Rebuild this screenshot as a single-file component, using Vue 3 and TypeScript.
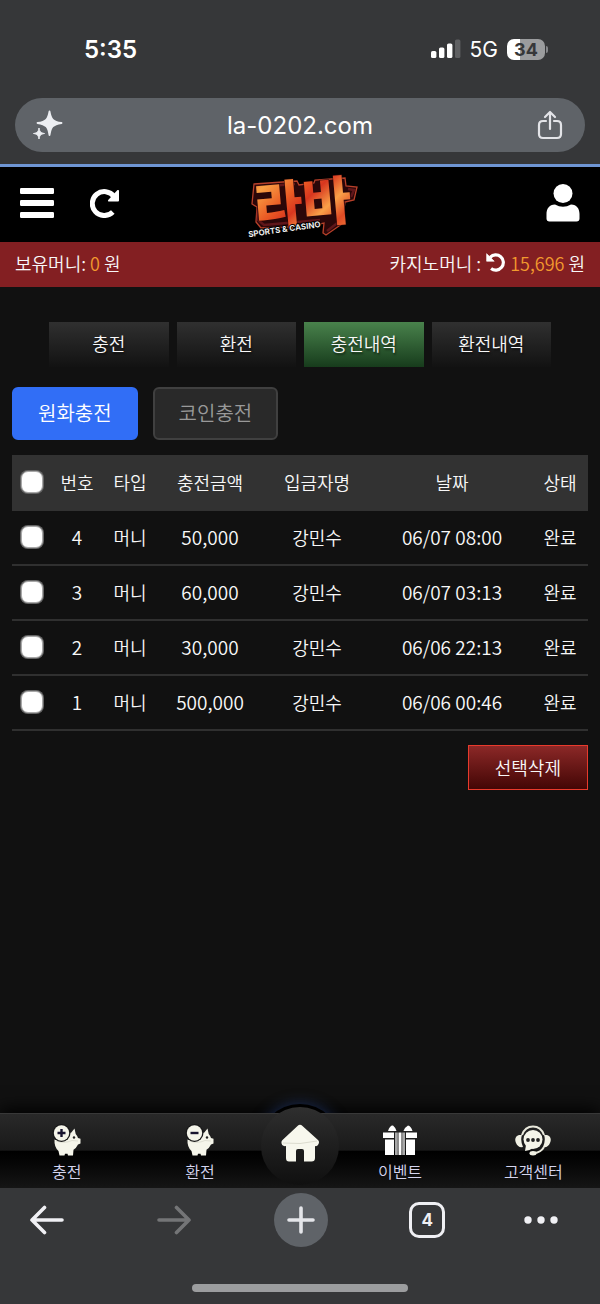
<script setup lang="ts">
import { ref, computed } from 'vue'

interface Deposit {
  no: number
  type: string
  amount: string
  name: string
  date: string
  status: string
}

const tabs = ['충전', '환전', '충전내역', '환전내역']
const activeTab = ref(2)
const methods = ['원화충전', '코인충전']
const activeMethod = ref(0)

const rows: Deposit[] = [
  { no: 4, type: '머니', amount: '50,000', name: '강민수', date: '06/07 08:00', status: '완료' },
  { no: 3, type: '머니', amount: '60,000', name: '강민수', date: '06/07 03:13', status: '완료' },
  { no: 2, type: '머니', amount: '30,000', name: '강민수', date: '06/06 22:13', status: '완료' },
  { no: 1, type: '머니', amount: '500,000', name: '강민수', date: '06/06 00:46', status: '완료' },
]

const selected = ref<number[]>([])
const allSelected = computed({
  get: () => selected.value.length === rows.length,
  set: (on: boolean) => {
    selected.value = on ? rows.map((r) => r.no) : []
  },
})
</script>

<template>
  <div class="screen">
    <div class="browser-top">
      <div class="status">
        <span class="clock">5:35</span>
        <div class="status-right">
          <svg width="30" height="20" viewBox="0 0 30 20" aria-hidden="true">
            <rect x="0" y="12" width="5.400" height="7" rx="1.600" fill="#fff" />
            <rect x="8" y="8.500" width="5.400" height="10.500" rx="1.600" fill="#fff" />
            <rect x="16" y="4.500" width="5.400" height="14.500" rx="1.600" fill="#fff" />
            <rect x="24" y="0.500" width="5.400" height="18.500" rx="1.600" fill="#5f6062" />
          </svg>
          <span class="network">5G</span>
          <span class="battery"><span class="battery-body">34</span><span class="battery-tip"></span></span>
        </div>
      </div>
      <div class="address">
        <button type="button" class="bare" aria-label="AI">
          <svg width="32" height="32" viewBox="0 0 32 32">
            <path d="M17.500 2.500C18.800 10 20.500 12.700 29.500 14C20.500 15.300 18.800 18 17.500 26C16.200 18 14.500 15.300 5.500 14C14.500 12.700 16.200 10 17.500 2.500Z" fill="#eceef2" stroke="#eceef2" stroke-width="1.800" stroke-linejoin="round" />
            <path d="M7 19C7.600 22.500 8.500 23.900 12.500 24.500C8.500 25.100 7.600 26.500 7 30C6.400 26.500 5.500 25.100 1.500 24.500C5.500 23.900 6.400 22.500 7 19Z" fill="#eceef2" stroke="#eceef2" stroke-linejoin="round" />
          </svg>
        </button>
        <span class="url">la-0202.com</span>
        <button type="button" class="bare" aria-label="공유">
          <svg width="28" height="32" viewBox="0 0 28 32" fill="none" stroke="#e3e4e8" stroke-width="2.200" stroke-linecap="round" stroke-linejoin="round">
            <path d="M10 12H7Q3 12 3 16V25Q3 29 7 29H21Q25 29 25 25V16Q25 12 21 12H18" />
            <path d="M14 20V4M9 8L14 3L19 8" />
          </svg>
        </button>
      </div>
    </div>
    <div class="progress"></div>

    <header class="site-header">
      <div class="left-tools">
        <button type="button" class="bare" aria-label="메뉴">
          <svg width="34" height="30" viewBox="0 0 34 30" fill="#fff">
            <rect y="0" width="34" height="6" rx="1.200" />
            <rect y="12" width="34" height="6" rx="1.200" />
            <rect y="24" width="34" height="6" rx="1.200" />
          </svg>
        </button>
        <button type="button" class="bare" aria-label="새로고침">
          <svg width="30" height="30" viewBox="0 0 30 30">
            <path d="M22.800 24A12 12 0 1 1 24 8.500" fill="none" stroke="#fff" stroke-width="5" />
            <path d="M29 2.500V12.500Q29 13.500 28 13.500H18.500Q17.500 13 18.200 12L27.500 2.100Q28.600 1.500 29 2.500Z" fill="#fff" />
          </svg>
        </button>
      </div>
      <a href="#" class="logo" aria-label="라바 SPORTS &amp; CASINO">
        <svg width="112" height="60" viewBox="0 0 112 60">
          <defs>
            <linearGradient id="lava" x1="0" y1="0" x2="1" y2="1">
              <stop offset="0" stop-color="#ee5a22" />
              <stop offset="0.200" stop-color="#f9a044" />
              <stop offset="0.400" stop-color="#ea5a24" />
              <stop offset="0.520" stop-color="#d8361f" />
              <stop offset="0.680" stop-color="#f9a048" />
              <stop offset="0.820" stop-color="#e04a24" />
              <stop offset="1" stop-color="#f59145" />
            </linearGradient>
          </defs>
          <path d="M7 6L50 3L52 7L67 5L68 2L98 0L99 8L110 9L107 22L98 24L95 46L79 57L76 55L77 45L54 50L48 49L14 50L9 44L10 29L5 26Z" fill="#2b0709" stroke="#b8402a" stroke-width="1.300" />
          <path d="M9 9L48 6M11 30V42L17 47L73 42M97 24L93 43L80 53M101 11L107 12L104 19" fill="none" stroke="#60161a" stroke-width="2.500" />
          <g transform="rotate(-5 56 30)">
            <text class="logo-word" x="56" y="45" text-anchor="middle">라바</text>
          </g>
          <g transform="rotate(-8 38 52)">
            <text class="logo-sub" x="1" y="54">SPORTS &amp; CASINO</text>
          </g>
        </svg>
      </a>
      <button type="button" class="bare" aria-label="내 정보">
        <svg width="34" height="40" viewBox="0 0 34 40" fill="#fff">
          <circle cx="17" cy="10.500" r="9.500" />
          <path d="M9 21.500Q17 26 25 21.500C31 21.500 33.500 26 33.500 31V35.500Q33.500 38.500 30.500 38.500H3.500Q.500 38.500 .500 35.500V31C.500 26 3 21.500 9 21.500Z" />
        </svg>
      </button>
    </header>

    <div class="money">
      <span>보유머니: <b>0</b> 원</span>
      <span class="casino">카지노머니 :
        <button type="button" class="bare" aria-label="카지노머니 새로고침">
          <svg width="19" height="19" viewBox="0 0 30 30">
            <g transform="matrix(-1 0 0 1 30 0)">
              <path d="M22 24.500A12 12 0 1 1 23.500 7" fill="none" stroke="#fff" stroke-width="5" />
              <path d="M29 1V13H17Z" fill="#fff" stroke="#fff" stroke-linejoin="round" />
            </g>
          </svg>
        </button>
        <span><b>15,696</b> 원</span></span>
    </div>

    <main class="content">
      <nav class="tabs" aria-label="충전 및 환전">
        <button v-for="(tab, i) in tabs" :key="tab" type="button" class="tab" :class="{ active: i === activeTab }" @click="activeTab = i">{{ tab }}</button>
      </nav>
      <div class="methods">
        <button v-for="(m, i) in methods" :key="m" type="button" class="method" :class="{ active: i === activeMethod }" @click="activeMethod = i">{{ m }}</button>
      </div>
      <table class="history">
        <colgroup>
          <col class="c-check" /><col class="c-no" /><col class="c-type" /><col class="c-amount" /><col class="c-name" /><col class="c-date" /><col class="c-status" />
        </colgroup>
        <thead>
          <tr>
            <th><input v-model="allSelected" type="checkbox" aria-label="전체 선택" /></th>
            <th>번호</th>
            <th>타입</th>
            <th>충전금액</th>
            <th>입금자명</th>
            <th>날짜</th>
            <th>상태</th>
          </tr>
        </thead>
        <tbody>
          <tr v-for="row in rows" :key="row.no">
            <td><input v-model="selected" type="checkbox" :value="row.no" :aria-label="`${row.no}번 선택`" /></td>
            <td class="num">{{ row.no }}</td>
            <td>{{ row.type }}</td>
            <td class="num">{{ row.amount }}</td>
            <td>{{ row.name }}</td>
            <td class="num">{{ row.date }}</td>
            <td>{{ row.status }}</td>
          </tr>
        </tbody>
      </table>
      <button type="button" class="delete">선택삭제</button>
    </main>

    <nav class="site-nav" aria-label="하단 메뉴">
      <span class="glow"></span>
      <div class="site-nav-bar">
        <a v-for="kind in ['충전', '환전']" :key="kind" href="#" class="nav-item">
          <svg width="34" height="34" viewBox="0 0 34 34">
            <path d="M4.500 16.500Q14 20 19 10Q21.500 10.500 22.300 8.300L24.500 5.500L25.700 11Q27.500 13 28 15L30.500 15.800V20.500L28 21.500Q26 25.500 23.500 26.800L23 32.500H18L17.500 30.800H15L14.500 32.500H9.500L8.500 28Q4 24 4.500 16.500Z" fill="#f5f5ea" />
            <path d="M6 18Q14 21 22 17.500L28 18" fill="none" stroke="#d5d5c8" stroke-width="0.700" />
            <circle cx="24" cy="14.500" r="1.200" fill="#222" />
            <circle cx="11.500" cy="10" r="9" fill="#171718" />
            <circle cx="11.500" cy="10" r="7.700" fill="#f5f5ea" />
            <path :d="kind === '충전' ? 'M7.500 10H15.500M11.500 6V14' : 'M7.500 10H15.500'" stroke="#18142f" stroke-width="2.400" />
          </svg>
          <span>{{ kind }}</span>
        </a>
        <a href="#" class="home" aria-label="홈">
          <svg width="40" height="40" viewBox="0 0 40 40">
            <path d="M17.500 3Q20 .500 22.500 3L38 17Q40 19 38 22Q37 23.500 35 23V35Q35 38.500 31.500 38.500H24V28Q24 26 22 26H18Q16 26 16 28V38.500H9Q6 38.500 6 35V23Q3.500 23.500 2.200 22Q.500 19 2.500 17Z" fill="#f7f7ed" />
            <path d="M3 20Q20 22 37 18" fill="none" stroke="#dcdccf" />
          </svg>
        </a>
        <a href="#" class="nav-item">
          <svg width="34" height="34" viewBox="0 0 34 34">
            <g fill="#fff">
              <path d="M5 8Q7 2 10 2.500Q12.500 4.500 13.500 8ZM20.500 8Q21.500 4.500 25 2.500Q28 3 29.500 8Z" />
              <path d="M0 9.500H11V15H0ZM23 9.500H34V15H23ZM2 16.500H11V32H2ZM23 16.500H32V32H23ZM15.500 9.500H18.500V32H15.500Z" />
            </g>
            <path d="M12 9.500H14.800V32H12ZM19.200 9.500H22V32H19.200Z" fill="#a8a8a8" />
          </svg>
          <span>이벤트</span>
        </a>
        <a href="#" class="nav-item">
          <svg width="38" height="34" viewBox="0 0 38 34">
            <path d="M8 12Q11 3.500 19 3.500Q27 3.500 30 12" fill="none" stroke="#e9e9dc" stroke-width="2" />
            <path d="M8 12Q6 17 9 24Q4 25 2 20Q-.500 14 5 12ZM30 12Q32 17 29 24Q34 25 36 20Q38.500 14 33 12Z" fill="#f0f0e4" />
            <path d="M30 24Q27 29.500 20 30" fill="none" stroke="#e9e9dc" stroke-width="2" />
            <ellipse cx="19" cy="30.200" rx="3.500" ry="2.200" fill="#f0f0e4" />
            <circle cx="19" cy="16.500" r="9.500" fill="#f5f5ea" />
            <path d="M12 22L11 28Q15 28 19 25Z" fill="#f5f5ea" />
            <circle cx="14" cy="17" r="1.900" fill="#222" /><circle cx="19" cy="17" r="1.900" fill="#222" /><circle cx="24" cy="17" r="1.900" fill="#222" />
          </svg>
          <span>고객센터</span>
        </a>
      </div>
    </nav>

    <footer class="browser-bottom">
      <div class="toolbar">
        <button type="button" class="bare" aria-label="뒤로">
          <svg width="36" height="30" viewBox="0 0 36 30" fill="none" stroke="#f0f0f4" stroke-width="3.600" stroke-linecap="round" stroke-linejoin="round"><path d="M33 15H3M15.500 2.500L3 15L15.500 27.500" /></svg>
        </button>
        <button type="button" class="bare" aria-label="앞으로" disabled>
          <svg width="36" height="30" viewBox="0 0 36 30" fill="none" stroke="#747577" stroke-width="3.600" stroke-linecap="round" stroke-linejoin="round"><path d="M3 15H33M20.500 2.500L33 15L20.500 27.500" /></svg>
        </button>
        <button type="button" class="bare new-tab" aria-label="새 탭">
          <svg width="28" height="28" viewBox="0 0 28 28" fill="none" stroke="#e4e5e9" stroke-width="3.600" stroke-linecap="round"><path d="M2 14H26M14 2V26" /></svg>
        </button>
        <button type="button" class="bare" aria-label="탭 목록"><span class="tab-count">4</span></button>
        <button type="button" class="bare" aria-label="더보기">
          <svg width="34" height="8" viewBox="0 0 34 8" fill="#f0f0f4"><circle cx="4" cy="4" r="3.700" /><circle cx="17" cy="4" r="3.700" /><circle cx="30" cy="4" r="3.700" /></svg>
        </button>
      </div>
      <div class="home-indicator"></div>
    </footer>
  </div>
</template>

<style>
body {
  background: #111;
}
</style>

<style scoped>
.screen {
  display: flex;
  flex-direction: column;
  min-height: 100vh;
  background: #111;
  color: #f8f8f8;
  font-family: "Noto Sans CJK KR", sans-serif;
  font-weight: 350;
  font-size: 18px;
}
.screen *,
.screen *::before {
  box-sizing: border-box;
}
button {
  font: inherit;
  color: inherit;
  cursor: pointer;
}
svg {
  display: block;
}
.bare {
  display: flex;
  align-items: center;
  justify-content: center;
  padding: 0;
  border: 0;
  background: none;
}
a {
  color: inherit;
  text-decoration: none;
}

.browser-top {
  padding: 0 15px 12px;
  background: #363739;
  color: #fff;
  font-family: Inter, sans-serif;
}
.status {
  display: flex;
  align-items: center;
  justify-content: space-between;
  height: 98px;
  padding: 0 37px 0 69px;
}
.clock {
  font-size: 24px;
  font-weight: 600;
}
.status-right {
  display: flex;
  align-items: center;
  gap: 9px;
}
.network {
  font-size: 21px;
  font-weight: 400;
}
.battery {
  display: flex;
  align-items: center;
  gap: 1px;
}
.battery-body {
  width: 38px;
  height: 21px;
  border-radius: 7px;
  background: linear-gradient(90deg, #fff 34%, #9b9c9e 34%);
  color: #363739;
  font-size: 18px;
  font-weight: 700;
  line-height: 21px;
  text-align: center;
}
.battery-tip {
  width: 2px;
  height: 7px;
  border-radius: 0 2px 2px 0;
  background: #85868a;
}
.address {
  display: flex;
  align-items: center;
  justify-content: space-between;
  height: 54px;
  padding: 0 21px 0 17px;
  border-radius: 27px;
  background: #5f6368;
}
.url {
  font-size: 24px;
  font-weight: 400;
}
.progress {
  height: 3px;
  background: #6f95d3;
}

.site-header {
  display: flex;
  align-items: center;
  justify-content: space-between;
  height: 75px;
  padding: 0 20px 4px;
  background: #000;
  position: relative;
}
.left-tools {
  display: flex;
  align-items: center;
  gap: 36px;
}
.logo {
  position: absolute;
  left: 50%;
  top: 11px;
  margin-left: -53px;
}
.logo svg {
  overflow: visible;
}
.logo-word {
  font-size: 53px;
  font-weight: 900;
  fill: url(#lava);
  stroke: #2b0709;
  stroke-width: 1px;
  paint-order: stroke;
}
.logo-sub {
  font-family: Inter, sans-serif;
  font-size: 8px;
  font-weight: 700;
  fill: #eee;
  stroke: #000;
  stroke-width: 2px;
  paint-order: stroke;
}

.money {
  display: flex;
  align-items: center;
  justify-content: space-between;
  height: 45px;
  padding: 0 15px 4px;
  background: #831f22;
}
.money b {
  color: #f29a2e;
  font-weight: inherit;
}
.casino {
  display: flex;
  align-items: center;
  gap: 5px;
}

.content {
  flex: 1;
  display: flex;
  flex-direction: column;
  padding: 35px 12px;
}
.tabs {
  display: grid;
  grid-template-columns: repeat(4, 1fr);
  gap: 8px;
  padding: 0 37px;
}
.tab {
  height: 45px;
  padding: 0 0 4px;
  border: 0;
  background: linear-gradient(#303030, #121212);
  text-shadow: 1px 2px 2px #0008;
}
.tab.active {
  background: linear-gradient(#49824c, #173c1c);
}
.methods {
  display: flex;
  gap: 15px;
  margin: 20px 0 15px;
}
.method {
  height: 53px;
  padding: 0 24px 2px;
  border: 2px solid #404040;
  border-radius: 6px;
  background: #292929;
  color: #999;
  font-size: 20px;
}
.method.active {
  border-color: #316ef6;
  background: #316ef6;
  color: #fff;
}

.history {
  width: 100%;
  table-layout: fixed;
  border-collapse: separate;
  border-spacing: 0;
}
.c-check { width: 40px; }
.c-no { width: 50px; }
.c-type { width: 56px; }
.c-amount { width: 104px; }
.c-name { width: 110px; }
.c-date { width: 160px; }
.c-status { width: 56px; }
.history th,
.history td {
  padding: 0 0 2px;
  font-weight: inherit;
  line-height: 24px;
  text-align: center;
  white-space: nowrap;
}
.history th {
  height: 56px;
  background: #323232;
}
.history td {
  height: 55px;
  border-bottom: 2px solid #303030;
}
.history .num {
  font-size: 19px;
}
.history input {
  appearance: none;
  display: block;
  width: 22px;
  height: 22px;
  margin: 0 auto;
  border: 1px solid #a8a8a8;
  border-radius: 7px;
  background: #fff;
  box-shadow: 0 0 0 1px #666;
}
.history input:checked {
  background: #316ef6;
}
.delete {
  align-self: flex-end;
  height: 45px;
  margin-top: 14px;
  padding: 0 26px 2px;
  border: 1px solid #e83a2c;
  background: linear-gradient(#8b2827, #430605);
}

.site-nav {
  position: relative;
  box-shadow: 0 -4px 16px #000;
}
.glow {
  position: absolute;
  left: 50%;
  top: -9px;
  width: 82px;
  height: 82px;
  margin-left: -41px;
  border-radius: 50%;
  background: #000;
  box-shadow: 0 0 14px #1b2c55;
}
.site-nav-bar {
  position: relative;
  display: grid;
  grid-template-columns: 2fr 2fr 1fr 2fr 2fr;
  height: 75px;
  border-top: 1px solid #383838;
  background: linear-gradient(#292929, #191919 49%, #000 50%, #030303 60%, #151515);
}
.nav-item {
  display: flex;
  flex-direction: column;
  align-items: center;
  gap: 2px;
  padding-top: 9px;
  color: #d5d5ef;
  font-size: 16px;
  line-height: 24px;
}
.home {
  position: relative;
}
.home::before {
  content: "";
  position: absolute;
  left: 50%;
  top: -7px;
  width: 78px;
  height: 78px;
  margin-left: -39px;
  border-radius: 50%;
  background: linear-gradient(#2f2f2f, #1b1b1b 60%, #101010);
}
.home svg {
  position: absolute;
  left: 50%;
  top: 9px;
  margin-left: -20px;
}

.browser-bottom {
  position: relative;
  height: 116px;
  padding-top: 5px;
  background: #363739;
}
.toolbar {
  display: grid;
  grid-template-columns: repeat(4, 5fr) 4fr;
  height: 54px;
  margin: 0 8px 0 -16px;
}
.new-tab {
  justify-self: center;
  width: 54px;
  height: 54px;
  border-radius: 50%;
  background: #5f6368;
}
.tab-count {
  width: 36px;
  height: 36px;
  border: 3px solid #f0f0f4;
  border-radius: 10px;
  color: #f0f0f4;
  font-family: Inter, sans-serif;
  font-size: 17px;
  font-weight: 700;
  line-height: 30px;
}
.home-indicator {
  width: 36%;
  height: 8px;
  margin: 37px auto 0;
  border-radius: 4px;
  background: #9c9d9f;
}
</style>
